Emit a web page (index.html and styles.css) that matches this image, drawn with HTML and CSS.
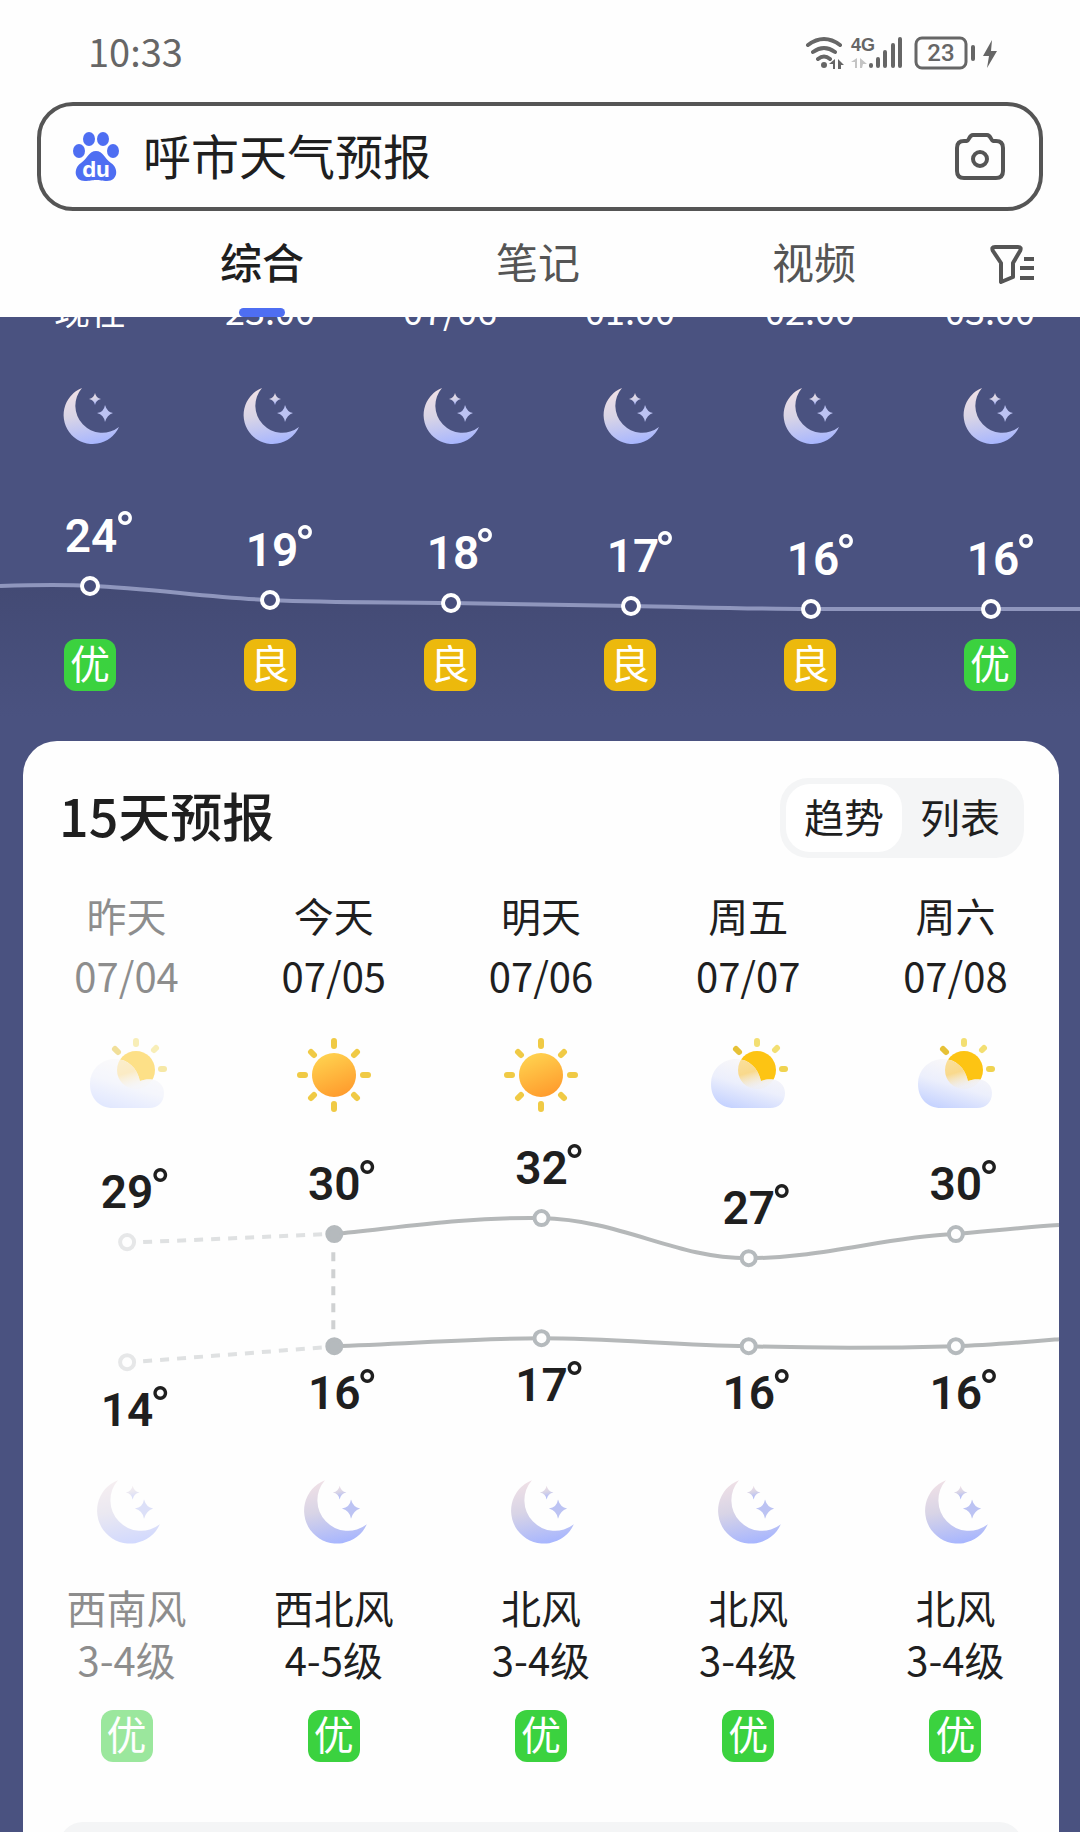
FILE: index.html
```html
<!DOCTYPE html>
<html lang="zh-CN">
<head>
  <meta charset="UTF-8">
  <meta name="viewport" content="width=device-width, initial-scale=1.0">
  <title>呼市天气预报</title>
  <link rel="stylesheet" href="styles.css">
</head>
<body>
  <!-- shared icons -->
  <svg class="sprite" aria-hidden="true">
    <defs>
      <linearGradient id="moon-fill" x1="0.4" y1="0" x2="0.6" y2="1">
        <stop offset="0" stop-color="#efe0e6"/>
        <stop offset="0.45" stop-color="#d8d4e6"/>
        <stop offset="1" stop-color="#a6b5ff"/>
      </linearGradient>
      <linearGradient id="sun-fill" x1="0.3" y1="0" x2="0.7" y2="1">
        <stop offset="0" stop-color="#ffd24f"/>
        <stop offset="1" stop-color="#ff9a2c"/>
      </linearGradient>
      <linearGradient id="cloud-fill" x1="0.7" y1="0.1" x2="0.3" y2="1">
        <stop offset="0" stop-color="#faf8f8"/>
        <stop offset="0.5" stop-color="#eceffc"/>
        <stop offset="1" stop-color="#c6d3ff"/>
      </linearGradient>
      <linearGradient id="haze-fill" x1="0" y1="0" x2="0.3" y2="1">
        <stop offset="0" stop-color="#fbe3a4"/>
        <stop offset="0.6" stop-color="#f9d98c"/>
        <stop offset="1" stop-color="#f3ead8" stop-opacity="0.2"/>
      </linearGradient>
      <clipPath id="cloud-clip">
        <path d="M34 78C20 78 11 68 11 54C11 40 22 29 36 29C49 29 58 38 61 51C75 46 85 53 85 63C85 72 79 78 70 78Z"/>
      </clipPath>
    </defs>
    <symbol id="moon" viewBox="0 0 60 60">
      <g fill="url(#moon-fill)">
        <path d="M22 1A29 29 0 1 0 59 40A27 27 0 0 1 22 1Z"/>
        <path d="M35 6Q36 11 41 12Q36 13 35 18Q34 13 29 12Q34 11 35 6Z"/>
      </g>
      <path fill="#bcc3f3" d="M45 18Q47 25 53 26Q47 28 45 35Q44 28 37 26Q44 25 45 18Z"/>
    </symbol>
    <symbol id="sunny" viewBox="0 0 80 80">
      <circle cx="40" cy="40" r="22" fill="url(#sun-fill)"/>
      <g stroke="#f0ca45" stroke-width="6" stroke-linecap="round">
        <path d="M40 6v5M40 69v5M6 40h5M69 40h5M17 17l3 3M60 60l3 3M17 63l3 -3M60 20l3 -3"/>
      </g>
    </symbol>
    <symbol id="cloudy" viewBox="8 5 80 80">
      <g stroke-width="6" stroke-linecap="round">
        <path stroke="#f3df72" d="M57 11v3M77 18l-2 2"/>
        <path stroke="#e6c136" d="M36 19l3 3"/>
        <path stroke="#f0d350" d="M82 39h3"/>
      </g>
      <circle cx="57" cy="40" r="19" fill="#fdc413"/>
      <path fill="url(#cloud-fill)" d="M34 78C20 78 11 68 11 54C11 40 22 29 36 29C49 29 58 38 61 51C75 46 85 53 85 63C85 72 79 78 70 78Z"/>
      <circle cx="57" cy="40" r="19" fill="url(#haze-fill)" clip-path="url(#cloud-clip)"/>
    </symbol>
  </svg>

  <header class="header">
    <div class="status">
      <time>10:33</time>
      <svg class="status-icons" viewBox="0 0 196 40" width="196" height="40" aria-hidden="true">
        <g fill="none" stroke="#666" stroke-width="4" stroke-linecap="round">
          <path d="M4 12Q20 0 36 12M9 19Q20 11 31 19M14 26Q20 21 26 26"/>
        </g>
        <circle cx="20" cy="32" r="3" fill="#666"/>
        <path fill="#666" d="M31 26v10h-2v-5h-4zM34 26l6 6h-3v4h-3z"/>
        <path fill="#c4c4c4" d="M53 25v10h-2v-6h-4zM56 25l7 6h-4l-1 4h-2z"/>
        <text class="net" x="47" y="18">4G</text>
        <g stroke="#666" stroke-width="4" stroke-linecap="round">
          <path d="M67 32v1M74 26v7M81 19v14M89 12v21M96 6v27"/>
        </g>
        <rect x="112" y="5" width="50" height="30" rx="6" fill="none" stroke="#666" stroke-width="3"/>
        <text class="level" x="137" y="28">23</text>
        <path d="M169 14v12" stroke="#666" stroke-width="4" stroke-linecap="round"/>
        <path d="M188 7l-9 16h6l-2 12l10 -17h-6z" fill="#666"/>
      </svg>
    </div>

    <form class="search">
      <svg class="paw" viewBox="10 10 46 50" width="46" height="50" aria-hidden="true">
        <g fill="#4e6ef2">
          <ellipse cx="26" cy="18" rx="6" ry="7"/>
          <ellipse cx="40" cy="18" rx="6" ry="7"/>
          <ellipse cx="16" cy="30" rx="6" ry="7"/>
          <ellipse cx="50" cy="30" rx="6" ry="7"/>
          <path d="M33 30C40 30 42 38 48 42C56 47 55 60 44 60C39 60 37 59 33 59C29 59 27 60 22 60C11 60 10 47 18 42C24 38 26 30 33 30Z"/>
        </g>
        <text class="paw-text" x="33" y="56">du</text>
      </svg>
      <input type="text" value="呼市天气预报" aria-label="搜索">
      <button type="button" class="icon-btn" aria-label="拍照搜索">
        <svg viewBox="0 0 50 48" width="50" height="48" fill="none" stroke="#555" stroke-width="4" stroke-linejoin="round">
          <path d="M9 9H12C14 9 14 3 18 3H32C36 3 36 9 38 9H41Q48 9 48 16V39Q48 46 41 46H9Q2 46 2 39V16Q2 9 9 9Z"/>
          <circle cx="25" cy="27" r="7"/>
        </svg>
      </button>
    </form>

    <nav class="tabs">
      <a href="#all" class="active">综合</a>
      <a href="#notes">笔记</a>
      <a href="#video">视频</a>
      <button type="button" class="icon-btn" aria-label="筛选">
        <svg viewBox="0 0 44 40" width="44" height="40" fill="none" stroke="#555" stroke-width="4" stroke-linejoin="round">
          <path d="M5 3H28Q32 3 30 7L23 19V33L11 38V19L3 7Q1 3 5 3Z"/>
          <path d="M34 15h10M30 24h14M30 34h14"/>
        </svg>
      </button>
    </nav>
  </header>

  <main class="weather">
    <section class="hourly">
      <ul class="hours">
        <li><span>现在</span><svg class="moon-sm"><use href="#moon"/></svg></li>
        <li><span>23:00</span><svg class="moon-sm"><use href="#moon"/></svg></li>
        <li><span>07/06</span><svg class="moon-sm"><use href="#moon"/></svg></li>
        <li><span>01:00</span><svg class="moon-sm"><use href="#moon"/></svg></li>
        <li><span>02:00</span><svg class="moon-sm"><use href="#moon"/></svg></li>
        <li><span>03:00</span><svg class="moon-sm"><use href="#moon"/></svg></li>
      </ul>
      <svg class="chart hour-chart" viewBox="0 0 1080 192">
        <defs>
          <linearGradient id="shade" x1="0" y1="0" x2="0" y2="1">
            <stop offset="0" stop-color="#434a74"/>
            <stop offset="1" stop-color="#434a74" stop-opacity="0"/>
          </linearGradient>
        </defs>
        <path fill="url(#shade)" d="M0 139C30 138 60 137 90 139C150 141 210 151 270 153C330 156 390 155 451 156L631 159C690 160 750 162 811 162H1080V270H0Z"/>
        <path class="hour-line" d="M0 139C30 138 60 137 90 139C150 141 210 151 270 153C330 156 390 155 451 156L631 159C690 160 750 162 811 162H1080"/>
        <g class="hour-dots">
          <circle cx="90" cy="139" r="8"/>
          <circle cx="270" cy="153" r="8"/>
          <circle cx="451" cy="156" r="8"/>
          <circle cx="631" cy="159" r="8"/>
          <circle cx="811" cy="162" r="8"/>
          <circle cx="991" cy="162" r="8"/>
        </g>
        <g class="temps">
          <text x="91" y="105">24</text><text class="deg" x="125" y="104">°</text>
          <text x="272" y="119">19</text><text class="deg" x="305" y="118">°</text>
          <text x="453" y="122">18</text><text class="deg" x="485" y="121">°</text>
          <text x="633" y="125">17</text><text class="deg" x="665" y="124">°</text>
          <text x="813" y="128">16</text><text class="deg" x="846" y="127">°</text>
          <text x="993" y="128">16</text><text class="deg" x="1026" y="127">°</text>
        </g>
      </svg>
      <ul class="hours air">
        <li><b class="badge good">优</b></li>
        <li><b class="badge fair">良</b></li>
        <li><b class="badge fair">良</b></li>
        <li><b class="badge fair">良</b></li>
        <li><b class="badge fair">良</b></li>
        <li><b class="badge good">优</b></li>
      </ul>
    </section>

    <section class="card">
      <div class="card-head">
        <h2>15天预报</h2>
        <div class="toggle">
          <button type="button" class="on">趋势</button>
          <button type="button">列表</button>
        </div>
      </div>

      <ul class="days">
        <li class="past"><span>昨天</span><span>07/04</span><svg class="day-icon"><use href="#cloudy"/></svg></li>
        <li><span>今天</span><span>07/05</span><svg class="day-icon"><use href="#sunny"/></svg></li>
        <li><span>明天</span><span>07/06</span><svg class="day-icon"><use href="#sunny"/></svg></li>
        <li><span>周五</span><span>07/07</span><svg class="day-icon"><use href="#cloudy"/></svg></li>
        <li><span>周六</span><span>07/08</span><svg class="day-icon"><use href="#cloudy"/></svg></li>
      </ul>

      <svg class="chart day-chart" viewBox="0 0 1035 330">
        <path class="dashed" d="M120 127L302 119M120 246L302 232"/>
        <path class="dashed today" d="M310 137V222"/>
        <path class="day-line" d="M310 119C380 112 440 102 517 103C600 105 650 143 724 143C800 143 860 122 931 119C966 116 1000 112 1035 110"/>
        <path class="day-line" d="M310 231C380 229 450 223 517 223C590 223 650 230 724 231C790 233 860 233 931 231C966 230 1000 227 1035 224"/>
        <g class="day-dots">
          <circle class="faded" cx="104" cy="127" r="7"/>
          <circle class="full" cx="311" cy="119" r="7"/>
          <circle cx="518" cy="103" r="7"/>
          <circle cx="725" cy="143" r="7"/>
          <circle cx="932" cy="119" r="7"/>
          <circle class="faded" cx="104" cy="247" r="7"/>
          <circle class="full" cx="311" cy="231" r="7"/>
          <circle cx="518" cy="223" r="7"/>
          <circle cx="725" cy="231" r="7"/>
          <circle cx="932" cy="231" r="7"/>
        </g>
        <g class="temps">
          <text x="104" y="93">29</text><text class="deg" x="137" y="93">°</text>
          <text x="311" y="85">30</text><text class="deg" x="344" y="85">°</text>
          <text x="518" y="69">32</text><text class="deg" x="551" y="69">°</text>
          <text x="725" y="109">27</text><text class="deg" x="758" y="109">°</text>
          <text x="932" y="85">30</text><text class="deg" x="965" y="85">°</text>
          <text x="104" y="311">14</text><text class="deg" x="137" y="311">°</text>
          <text x="311" y="294">16</text><text class="deg" x="344" y="294">°</text>
          <text x="518" y="286">17</text><text class="deg" x="551" y="286">°</text>
          <text x="725" y="294">16</text><text class="deg" x="758" y="294">°</text>
          <text x="932" y="294">16</text><text class="deg" x="965" y="294">°</text>
        </g>
      </svg>

      <ul class="days nights">
        <li class="past"><svg class="moon-lg"><use href="#moon"/></svg><span>西南风</span><span>3-4级</span><b class="badge good">优</b></li>
        <li><svg class="moon-lg"><use href="#moon"/></svg><span>西北风</span><span>4-5级</span><b class="badge good">优</b></li>
        <li><svg class="moon-lg"><use href="#moon"/></svg><span>北风</span><span>3-4级</span><b class="badge good">优</b></li>
        <li><svg class="moon-lg"><use href="#moon"/></svg><span>北风</span><span>3-4级</span><b class="badge good">优</b></li>
        <li><svg class="moon-lg"><use href="#moon"/></svg><span>北风</span><span>3-4级</span><b class="badge good">优</b></li>
      </ul>

      <div class="more"></div>
    </section>
  </main>
</body>
</html>
```
FILE: styles.css
```css
* {
  box-sizing: border-box;
}
body {
  margin: 0;
  height: 100vh;
  display: flex;
  flex-direction: column;
  font-family: "Noto Sans CJK SC", sans-serif;
  font-size: 40px;
  color: #1f1f1f;
  background: #4a5280;
}
ul {
  list-style: none;
  margin: 0;
  padding: 0;
}
svg {
  display: block;
  flex-shrink: 0;
}
.sprite {
  position: absolute;
  width: 0;
  height: 0;
}

/* header */
.header {
  position: relative;
  z-index: 2;
  flex-shrink: 0;
  background: #fefefe;
}
.status {
  display: flex;
  align-items: center;
  justify-content: space-between;
  height: 102px;
  padding: 4px 80px 0 88px;
  font-size: 38px;
  color: #666;
}
.status time {
  padding-bottom: 6px;
}
.net {
  font: 700 18px "Liberation Sans", sans-serif;
  fill: #666;
}
.level {
  font: 500 24px Roboto, sans-serif;
  fill: #666;
  text-anchor: middle;
}
.search {
  display: flex;
  align-items: center;
  gap: 24px;
  height: 109px;
  margin: 0 37px;
  padding: 0 34px 2px 32px;
  border: 4px solid #555;
  border-radius: 36px;
}
.search input {
  flex: 1;
  min-width: 0;
  padding: 0 0 4px;
  border: none;
  outline: none;
  background: none;
  font: inherit;
  font-size: 48px;
  color: #1f1f1f;
}
.paw-text {
  font: 700 22px Inter, sans-serif;
  fill: #fff;
  text-anchor: middle;
}
.icon-btn {
  padding: 0;
  border: none;
  background: none;
  cursor: pointer;
}
.tabs {
  display: flex;
  align-items: center;
  height: 106px;
  padding: 0 46px 0 124px;
}
.tabs a {
  position: relative;
  flex: 1;
  padding-bottom: 6px;
  line-height: 100px;
  text-align: center;
  text-decoration: none;
  font-size: 42px;
  color: #555;
}
.tabs .active {
  font-weight: 500;
  color: #1f1f1f;
}
.tabs .active::after {
  content: "";
  position: absolute;
  left: 50%;
  bottom: 0;
  width: 46px;
  height: 9px;
  margin-left: -23px;
  border-radius: 5px;
  background: #4e6ef2;
}
.tabs .icon-btn {
  margin-left: 38px;
}

/* hourly forecast */
.weather {
  flex: 1;
  min-height: 0;
  overflow-y: auto;
  scrollbar-width: none;
  background: #4a5280;
}
.hourly {
  margin-top: -32px;
  padding-bottom: 50px;
  color: #fff;
}
.hours {
  display: grid;
  grid-template-columns: repeat(6, 1fr);
  font-size: 36px;
  line-height: 48px;
}
.hours li,
.days li {
  display: flex;
  flex-direction: column;
  align-items: center;
}
.moon-sm {
  width: 60px;
  height: 60px;
  margin-top: 54px;
}
.chart {
  width: 100%;
  height: auto;
  overflow: visible;
}
.hour-line {
  fill: none;
  stroke: #8f96bd;
  stroke-width: 4;
}
.hour-dots circle {
  fill: #474e7c;
  stroke: #fff;
  stroke-width: 4;
}
.temps text {
  font-family: Roboto, sans-serif;
  font-size: 46px;
  font-weight: 600;
  text-anchor: middle;
  fill: #1f1f1f;
}
.temps .deg {
  font-size: 56px;
  font-weight: 400;
}
.hour-chart .temps text {
  fill: #fff;
}
.air {
  position: relative;
}
.badge {
  width: 52px;
  height: 52px;
  border-radius: 12px;
  font-size: 40px;
  font-weight: 400;
  line-height: 46px;
  text-align: center;
  color: #fff;
}
.good {
  background: #3bd23f;
}
.fair {
  background: #ecb90c;
}

/* 15 day forecast */
.card {
  position: relative;
  margin: 0 21px 0 23px;
  padding-top: 37px;
  border-radius: 34px 34px 0 0;
  background: #fefefe;
}
.card-head {
  display: flex;
  align-items: center;
  justify-content: space-between;
  padding: 0 35px 0 36px;
}
.card-head h2 {
  margin: 0;
  padding-bottom: 6px;
  font-size: 52px;
  font-weight: 500;
  line-height: 74px;
}
.toggle {
  display: flex;
  padding: 6px;
  border-radius: 28px;
  background: #f4f5f6;
}
.toggle button {
  width: 116px;
  height: 68px;
  padding: 0 0 4px;
  border: none;
  border-radius: 24px;
  background: none;
  font: inherit;
  line-height: 64px;
  color: #1f1f1f;
}
.toggle .on {
  background: #fff;
}
.days {
  display: grid;
  grid-template-columns: repeat(5, 1fr);
  margin-top: 27px;
  line-height: 60px;
}
.past {
  opacity: 0.5;
}
.day-icon {
  width: 80px;
  height: 80px;
  margin-top: 30px;
}
.day-line {
  fill: none;
  stroke: #b5b8b9;
  stroke-width: 4;
}
.dashed {
  fill: none;
  stroke: #dfe1e2;
  stroke-width: 4;
  stroke-dasharray: 9 8;
}
.today {
  stroke: #cfd1d2;
}
.day-dots circle {
  fill: #fefefe;
  stroke: #b5babd;
  stroke-width: 4;
}
.day-dots .full {
  fill: #b5babd;
}
.day-dots .faded {
  stroke: #e6e7e8;
}
.nights {
  margin-top: 34px;
  line-height: 52px;
}
.moon-lg {
  width: 68px;
  height: 68px;
  margin-bottom: 34px;
}
.nights .badge {
  margin-top: 25px;
}
.more {
  height: 80px;
  margin: 60px 36px 0;
  border-radius: 24px;
  background: #f4f5f6;
}
```
